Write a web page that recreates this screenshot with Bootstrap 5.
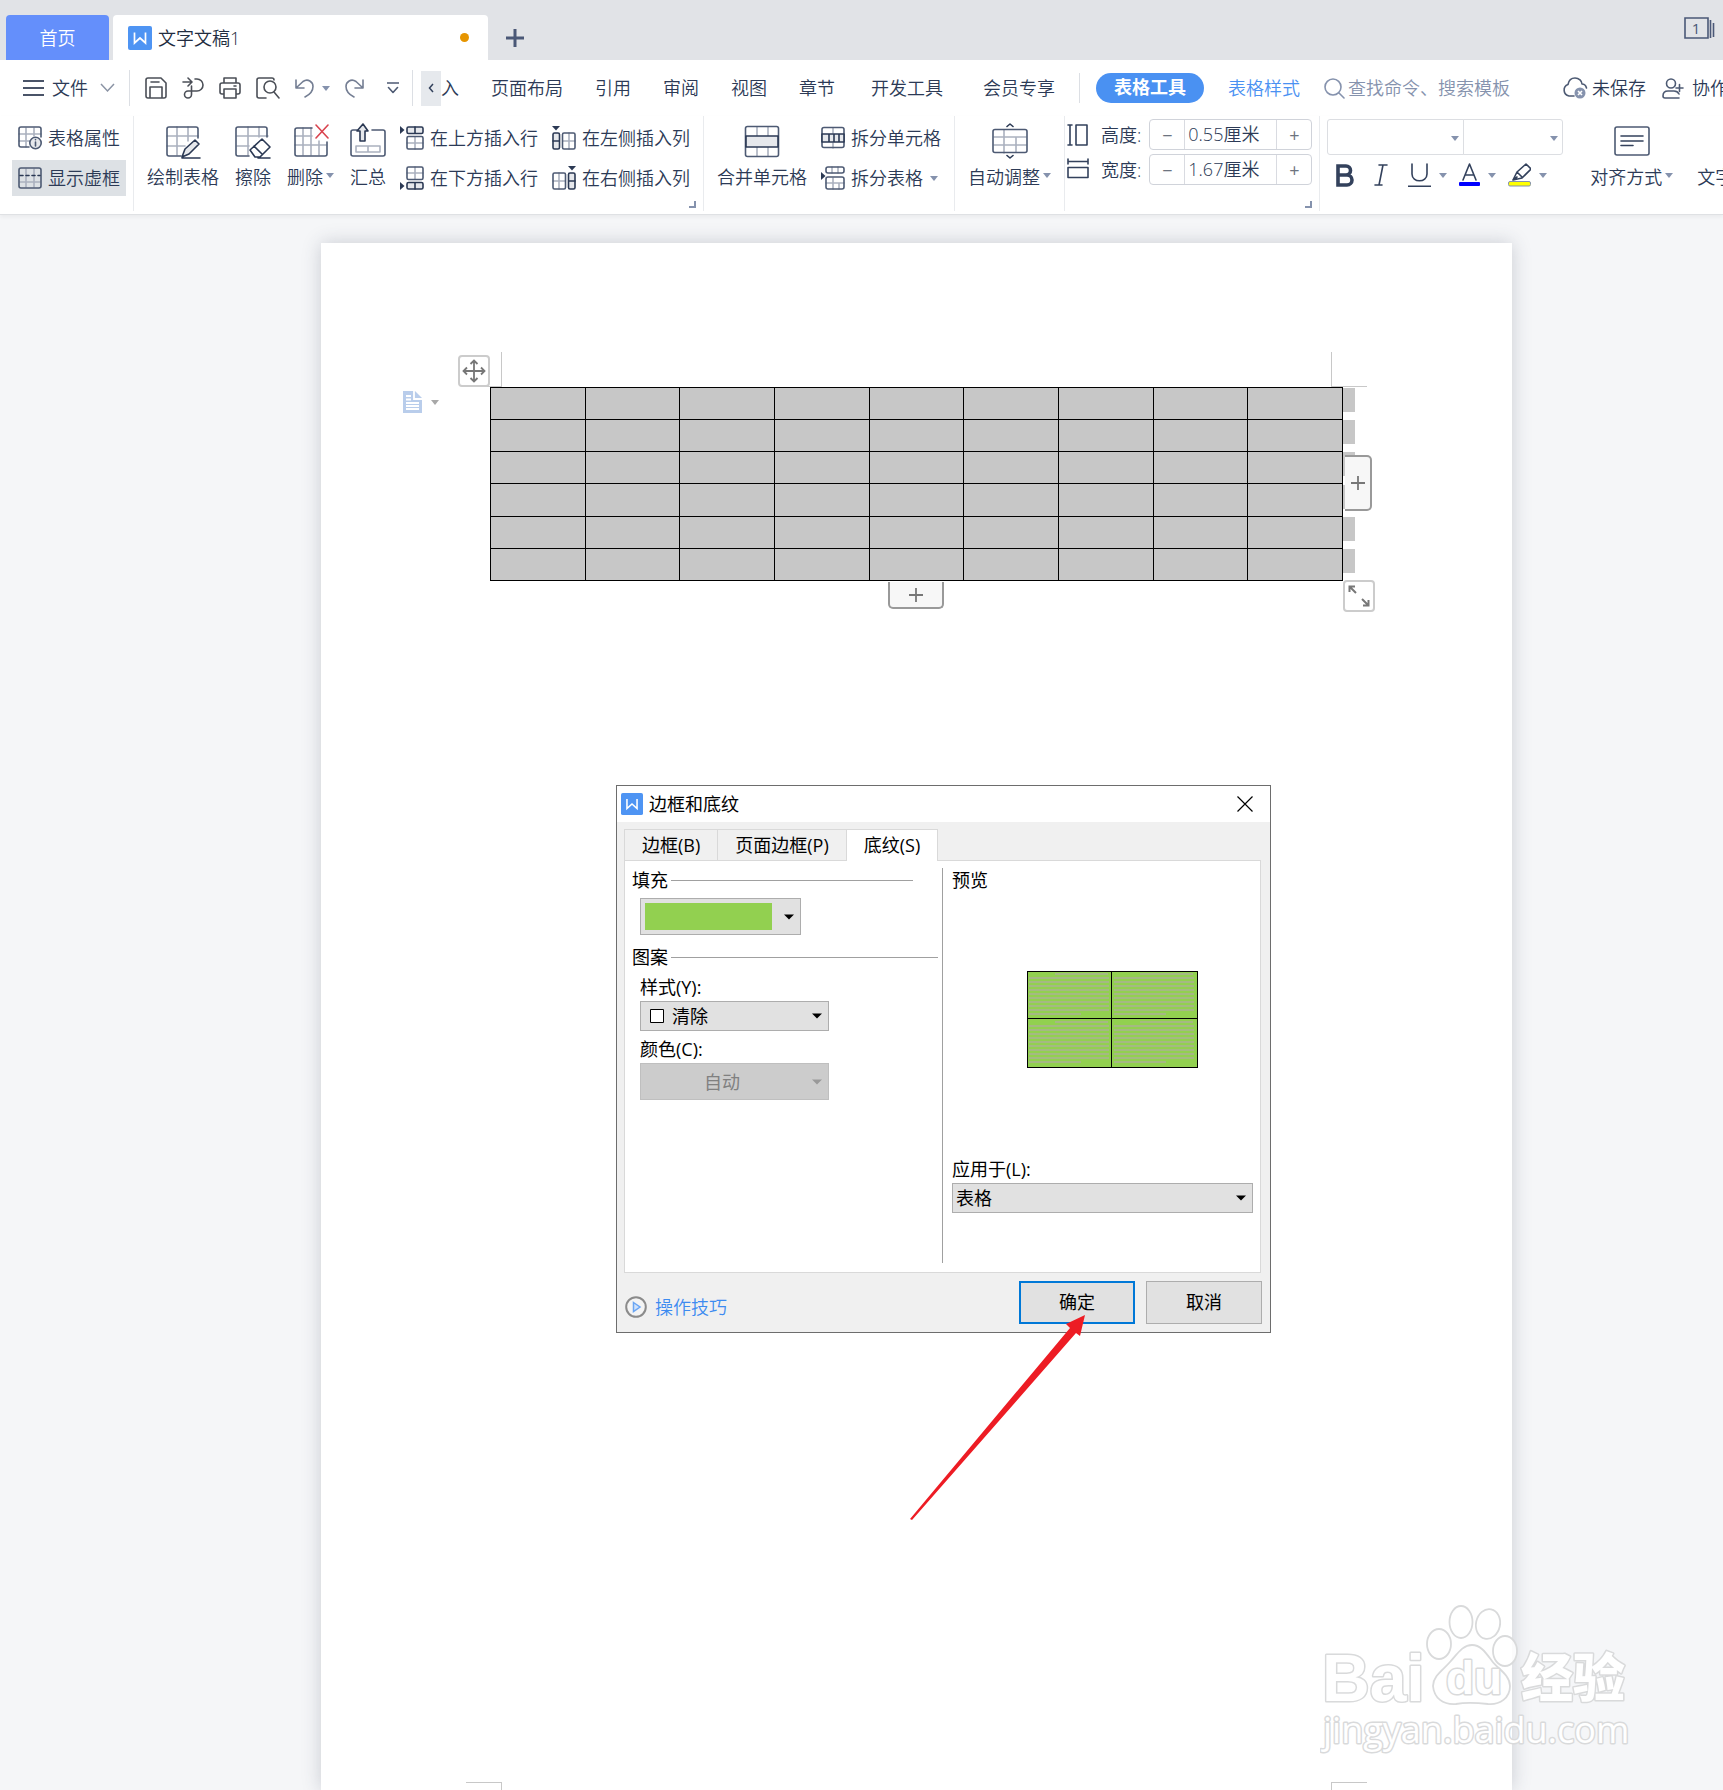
<!DOCTYPE html>
<html lang="zh-CN">
<head>
<meta charset="utf-8">
<meta name="viewport" content="width=device-width, initial-scale=1">
<title>文字文稿1</title>
<link href="https://cdn.jsdelivr.net/npm/bootstrap@5.3.0/dist/css/bootstrap.min.css" rel="stylesheet">
<style>
:root{--ink:#2c3a56;--soft:#8592ad;--rule:#e9ebee;--blue:#4a91f2}
body{font-family:"Open Sans","Noto Sans CJK SC",sans-serif;font-size:18px;font-weight:350;line-height:24px;color:var(--ink);background:#f5f6f8;overflow-x:hidden}
button,input,select{font-family:inherit;font-size:18px;font-weight:inherit;line-height:24px;color:inherit}
button{background:none;border:0;padding:0;white-space:nowrap}
svg{display:block;flex:none}
a{text-decoration:none;color:inherit}
.ln{fill:none;stroke:#4d5a73;stroke-width:1.6;stroke-linejoin:round;stroke-linecap:round}
.lt{stroke:#abb1bf}
.fl{fill:#e6e8ec}
.caret{width:0;height:0;border:4px solid transparent;border-top:5px solid var(--soft);border-bottom:0;flex:none}

.tabstrip{height:60px;padding:15px 4px 0 6px;background:#e1e3e7}
.home-tab{width:103px;color:#fff;background:#648ffb;border-radius:4px 4px 0 0}
.doc-tab{width:375px;margin-left:4px;padding:0 19px 0 15px;gap:6px;background:#fff;border-radius:4px 4px 0 0;color:#222c40}
.dot{width:9px;height:9px;border-radius:50%;background:#e69500}
.new-tab{margin-left:18px}
.wincount{margin-bottom:20px}
.menurow{height:56px;background:#fff}
.file-btn{margin:0 14px 0 23px}
.vr-line{width:1px;height:36px;background:#dcdfe4;flex:none}
.vr-short{height:30px}
.quick{gap:15px;padding:0 5px 0 15px}
.scroll-btn{width:20px;height:35px;background:#e6e9ed}
.menu-link{padding:0 16px;white-space:nowrap}
.menu-link.wide{padding:0 20px}
.pill{height:30px;padding:0 18px;line-height:28px;border-radius:15px;background:var(--blue);color:#fff;font-weight:700;white-space:nowrap}
.style-link{color:var(--blue)}
.search{gap:3px;color:var(--soft)}
.search input{width:190px;border:0;padding:0;background:none;outline:0}
.search input::placeholder{color:var(--soft);opacity:1}

.ribbon{height:99px;background:#fff;border-bottom:1px solid #dfe1e4;box-shadow:0 2px 4px rgba(0,0,0,.05);position:relative}
.rgroup{height:95px;padding-top:4px;border-right:1px solid var(--rule);position:relative;flex:none}
.g-show{padding-left:12px;padding-right:7px}
.g-edit{padding-left:13px;padding-right:13px}
.g-size{padding:3px 7px 0 2px}
.g-font{padding:3px 0 0 7px;border:0}
.g-align{padding-left:27px;border:0}
.small-btn{display:flex;align-items:center;gap:6px;height:36px}
.small-col{display:flex;flex-direction:column;gap:4px}
.after{margin-left:14px}
.boxed{padding:0 6px}
.boxed.on{background:#dde1e5}
.big-btn{display:flex;flex-direction:column;align-items:center;gap:6px;padding-top:3px;height:67px}
.big-btn svg{height:36px}
.cap{display:flex;align-items:center;gap:3px}
.big-btn .caret{margin-bottom:4px}
.corner{position:absolute;right:7px;bottom:3px;width:7px;height:7px;border:solid var(--soft);border-width:0 2px 2px 0}
.spin{display:flex;width:163px;height:31px;border:1px solid #d0d3da;border-radius:4px}
.spin button{width:34px;font-weight:400;color:#6d7480}
.spin input{width:93px;border:solid #d9dbe1;border-width:0 1px;padding:0 0 2px 3px;outline:0}
.combo{height:36px;border:1px solid #dcdee2;border-radius:3px;position:relative}
.combo select{appearance:none;border:0;background:none;width:100%;height:100%}
.combo .caret{position:absolute;right:4px;top:16px}
.c-name{width:137px;border-radius:3px 0 0 3px}
.c-pt{width:100px;border-radius:0 3px 3px 0;margin-left:-1px}
.fmt{padding:8px 0 0 9px}
.fmt button+button{margin-left:12px}
.fmt .wider+button{margin-left:20px}

.work{padding:28px 211px 0 321px;position:relative;overflow:hidden}
.sheet{min-height:1500px;padding:144px 169px 0;background:#fff;box-shadow:0 0 18px rgba(50,60,80,.22);position:relative}
.gridwrap{position:relative}
.docgrid{width:100%;height:194px;table-layout:fixed;border-collapse:collapse;background:#c7c7c7}
.docgrid td{border:1px solid #000;padding:0}
.handle{position:absolute;background:#fff;border:2px solid #ccc;border-radius:4px;width:32px;height:32px;display:grid;place-items:center}
.h-move{left:-32px;top:-32px}
.h-size{left:100%;top:calc(100% - 1px)}
.h-col{left:calc(100% + 2px);top:68px;width:27px;height:56px;background:#f7f7f7;border-color:#999;border-left:0;border-radius:0 5px 5px 0}
.h-row{left:calc(50% - 29px);top:calc(100% + 1px);width:56px;height:27px;background:#f7f7f7;border-color:#999;border-top:0;border-radius:0 0 5px 5px}
.marks{position:absolute;left:100%;top:1px;width:12px;height:185px;display:flex;flex-direction:column;justify-content:space-between}
.marks i{height:24px;background:#c7c7c7}
.crop{position:absolute;width:36px;height:35px;border:0 solid #c8c8c8}
.tl{left:-24px;top:-35px;border-width:0 1px 1px 0}
.tr{right:-24px;top:-35px;border-width:0 0 1px 1px}
.bl{left:145px;bottom:-27px;border-width:1px 1px 0 0}
.br{right:145px;bottom:-27px;border-width:1px 0 0 1px}
.para{position:absolute;left:-87px;top:4px;display:flex;align-items:center;gap:9px}
.para .caret{border-top-color:#a8a8a8}

.dlg{position:absolute;left:295px;top:542px;width:655px;border:1px solid #6d6d6d;background:#f0f0f0;color:#000;font-weight:400}
.dlg-title{height:36px;padding:0 17px 0 4px;gap:6px;background:#fff}
.dlg-tabs{padding:7px 7px 0;height:38px;display:flex;align-items:flex-end;position:relative}
.dlg-tabs button{height:31px;padding:0 17px;border:1px solid #d9d9d9;border-bottom:0;margin-right:-1px}
.dlg-tabs button.active{height:32px;background:#fff;margin-bottom:-1px;padding-bottom:2px;z-index:1}
.dlg-panel{margin:0 9px 0 7px;border:1px solid #d9d9d9;background:#fff;display:flex;height:413px}
.p-left{width:318px;margin:7px 0 9px;padding:0 4px 0 7px;border-right:1px solid #a0a0a0}
.p-right{flex:1;padding:7px 7px 0 9px}
.sect{display:flex;align-items:center;gap:3px}
.sect::after{content:"";flex:1;height:1px;background:#a0a0a0}
.sect.short{margin-right:25px}
.sect.next{padding-top:10px}
.inset{padding-left:8px;display:flex;flex-direction:column;align-items:flex-start}
.inset label{padding:6px 0 2px}
.pick{position:relative;background:#e1e1e1;border:1px solid #adadad;display:flex;align-items:center}
.pick select{appearance:none;background:none;border:0;width:100%;height:28px;padding:0 3px;color:#000;opacity:1;outline:0}
.pick .arr{position:absolute;right:6px}
.swatch{width:161px;height:37px;padding-left:4px;margin-top:6px}
.swatch span{width:127px;height:27px;background:#92d050}
.w-mid{width:189px}
.w-mid .box{position:absolute;left:9px}
.pick.w-mid select{padding-left:31px}
.pick.off{background:#ccc;border-color:#bfbfbf;height:37px;color:#808080}
.pick.off span{padding-left:63px}
.preview{margin:79px 0 89px 75px}
.p-right label{display:block;margin-bottom:2px}
.dlg-foot{padding:8px;display:flex;gap:11px}
.dlg-foot button{width:116px;height:43px;padding-bottom:2px;background:#e1e1e1;border:1px solid #adadad}
.dlg-foot button.main{border:2px solid #0078d7}
.help{color:#3d8bf0;gap:8px;padding-top:9px;font-weight:350}
.arrow{position:absolute;left:589px;top:1072px}
.wm{position:absolute;right:83px;bottom:30px}
.wm text{fill:#fff;stroke:#d9dadb;stroke-width:3;paint-order:stroke;stroke-linejoin:round}
</style>
</head>
<body class="d-flex flex-column min-vh-100">
<svg width="0" height="0" class="position-absolute">
  <symbol id="w" viewBox="0 0 24 24"><rect width="24" height="24" rx="2" fill="#4e94f3"/><path d="M6.500 6.500v10.500l5.500-5 5.500 5V6.500" fill="none" stroke="#fff" stroke-width="1.700"/></symbol>
  <symbol id="arr" viewBox="0 0 10 6"><path d="M0 0.500h10L5 5.500z"/></symbol>
  <symbol id="rowtop" viewBox="0 0 24 24"><path d="M0 0l4.500 4L0 8z" fill="#2b3954"/><g class="ln"><rect class="fl" x="7" y="1" width="16" height="6.500" rx="1.500" style="stroke:#2b3954"/><path d="M15 1v6" style="stroke:#2b3954"/><path class="lt" d="M15 11v12M7 17h16"/><rect x="7" y="10.500" width="16" height="12.500" rx="1.500"/></g></symbol>
</svg>

<header>
  <div class="tabstrip d-flex">
    <button class="home-tab">首页</button>
    <button class="doc-tab d-flex align-items-center">
      <svg width="24" height="24"><use href="#w"/></svg><span class="me-auto">文字文稿1</span><span class="dot"></span>
    </button>
    <button class="new-tab" aria-label="新建"><svg width="18" height="18"><path d="M9 0v18M0 9h18" stroke="#4a5877" stroke-width="3"/></svg></button>
    <button class="wincount ms-auto me-1" aria-label="窗口"><svg width="31" height="22" viewBox="0 0 31 22"><path d="M1 1h23v20H1zM26.500 3v18M29.500 6v14" fill="none" stroke="#4a5877" stroke-width="1.600"/><text x="12" y="17" text-anchor="middle" font-size="15" font-weight="400" fill="#4a5877">1</text></svg></button>
  </div>

  <nav class="menurow d-flex align-items-center overflow-hidden">
    <button class="file-btn d-flex align-items-center gap-2">
      <svg width="21" height="16"><path d="M0 1h21M0 8h21M0 15h21" stroke="#4a5468" stroke-width="1.800"/></svg>
      <span>文件</span>
      <svg width="15" height="10" class="ms-1"><path d="M1 1l6.500 7L14 1" fill="none" stroke="#8a93a4" stroke-width="1.500"/></svg>
    </button>
    <span class="vr-line"></span>
    <div class="quick d-flex align-items-center">
      <button aria-label="保存"><svg width="22" height="22" viewBox="0 0 22 22" class="ln" style="stroke:#4b4f57"><path d="M3 1h13l5 5v13a2 2 0 0 1-2 2H3a2 2 0 0 1-2-2V3a2 2 0 0 1 2-2M6 5h8M5 21V10h12v11"/></svg></button>
      <button aria-label="导出"><svg width="22" height="22" viewBox="0 0 22 22" class="ln" style="stroke:#4b4f57"><path d="M1 5h8M6 1l4 4-4 4M13 2h2a6 6 0 0 1 0 12H6a3.500 3.500 0 1 0 3.500 3.500V9"/></svg></button>
      <button aria-label="打印"><svg width="22" height="22" viewBox="0 0 22 22" class="ln" style="stroke:#4b4f57"><path d="M5 6V1h12v5M5 17H3a2 2 0 0 1-2-2V8a2 2 0 0 1 2-2h16a2 2 0 0 1 2 2v7a2 2 0 0 1-2 2h-2M5 12h12v9H5zM15 9h2"/></svg></button>
      <button aria-label="打印预览"><svg width="24" height="22" viewBox="0 0 24 22" class="ln" style="stroke:#4b4f57"><path d="M18 3a2 2 0 0 0-2-2H3a2 2 0 0 0-2 2v16a2 2 0 0 0 2 2h7M18 15l5 6"/><circle cx="14" cy="10" r="6"/></svg></button>
      <button class="d-flex align-items-center gap-2" aria-label="撤销"><svg width="19" height="20" viewBox="0 0 19 20" class="ln" style="stroke:#747e93"><path d="M1 2v8h8M1 10L8 3.500C13 0 18 4 18 8.500c0 5-3 8-8 10.500"/></svg><i class="caret"></i></button>
      <button aria-label="恢复"><svg width="19" height="20" viewBox="0 0 19 20" class="ln" style="stroke:#747e93"><path d="M18 2v8h-8M18 10l-7-6.500C6 0 1 4 1 8.500c0 5 3 8 8 10.500"/></svg></button>
      <button class="px-2" aria-label="更多"><svg width="12" height="12" viewBox="0 0 12 12" class="ln"><path d="M0 1h12M1.500 5.500L6 10.500l4.500-5"/></svg></button>
    </div>
    <span class="vr-line"></span>
    <button class="scroll-btn ms-2" aria-label="向左"><svg width="20" height="10"><path d="M12 1L8.500 5l3.500 4" fill="none" stroke="#33415c" stroke-width="1.500"/></svg></button>
    <a href="#" class="pe-3">入</a>
    <a href="#" class="menu-link">页面布局</a><a href="#" class="menu-link">引用</a><a href="#" class="menu-link">审阅</a><a href="#" class="menu-link">视图</a><a href="#" class="menu-link">章节</a><a href="#" class="menu-link wide">开发工具</a><a href="#" class="menu-link wide">会员专享</a>
    <span class="vr-line vr-short ms-1 me-3"></span>
    <a href="#" class="pill">表格工具</a>
    <a href="#" class="style-link ms-4 me-4 text-nowrap">表格样式</a>
    <label class="search d-flex align-items-center"><svg width="21" height="21" viewBox="0 0 21 21" class="ln" style="stroke:#8592ad"><circle cx="9" cy="9" r="8"/><path d="M15 15l5 5"/></svg><input type="text" placeholder="查找命令、搜索模板" aria-label="查找"></label>
    <button class="d-flex align-items-center gap-1 ms-4"><svg width="26" height="22" viewBox="0 0 26 22"><path class="ln" d="M12 19H7a6 6 0 0 1-1-11.500C7 2 11 1 13 1c4 0 7 3 7 6 3 0 4 2 4.500 4"/><circle cx="18" cy="16" r="5.500" fill="#8592ad"/><path d="M16 14l4 4M20 14l-4 4" stroke="#fff" stroke-width="1.600"/></svg>未保存</button>
    <button class="d-flex align-items-center gap-2 ms-3"><svg width="22" height="21" viewBox="0 0 22 21" class="ln"><circle cx="9" cy="5.500" r="4.500"/><path d="M17 20H3a2 2 0 0 1-2-2c0-4 3-5 5-5h6c3 0 4 1 5 3M14 10h7M17.500 6.500v7"/></svg>协作</button>
  </nav>

  <div class="ribbon d-flex overflow-hidden">
    <div class="rgroup g-show small-col">
      <button class="small-btn boxed"><svg width="24" height="24" viewBox="0 0 24 24" class="ln"><path class="lt" d="M8 2v19M16 2v8M1 8h22M1 15h12"/><path d="M11 21H3a2 2 0 0 1-2-2V3a2 2 0 0 1 2-2h18a2 2 0 0 1 2 2v8"/><circle class="fl" cx="17.500" cy="17" r="5.700"/><path d="M17.500 16v4M17.500 13.500v.2"/></svg>表格属性</button>
      <button class="small-btn boxed on"><svg width="24" height="22" viewBox="0 0 24 22" class="ln"><path class="lt" d="M8 2v18M16 2v18M2 15h20"/><rect x="1" y="1" width="22" height="20" rx="2"/><path d="M2 8.500h20" style="stroke:#2b3954;stroke-dasharray:3 3"/></svg>显示虚框</button>
    </div>

    <div class="rgroup g-edit d-flex">
      <div class="d-flex gap-3">
        <button class="big-btn"><svg width="36" viewBox="0 0 36 36" class="ln"><path class="lt" d="M12 4v28M23 4v14M2 13h31M2 23h18"/><path d="M16 33H4a2 2 0 0 1-2-2V6a2 2 0 0 1 2-2h27a2 2 0 0 1 2 2v9"/><path class="fl" d="M17 34l3-8 10-9 4 4-10 10-7 3zM17 35h18" style="stroke:#2b3954"/></svg>绘制表格</button>
        <button class="big-btn"><svg width="36" viewBox="0 0 36 36" class="ln"><path class="lt" d="M13 4v28M24 4v10M2 13h31M2 23h12"/><path d="M14 33H3a2 2 0 0 1-2-2V6a2 2 0 0 1 2-2h27a2 2 0 0 1 2 2v8"/><path d="M15 27l12-11 8 8-10 10h-5zM19 23l8 8M23 35h12" fill="#fff" style="stroke:#2b3954"/></svg>擦除</button>
        <button class="big-btn"><svg width="36" viewBox="0 0 36 36" class="ln"><path class="lt" d="M10 5v27M18 5v27M26 18v14M2 13h17M2 22h31"/><path d="M19 5H4a2 2 0 0 0-2 2v24a2 2 0 0 0 2 2h28a2 2 0 0 0 2-2V19"/><path d="M23 2l12 13M35 2L23 15" style="stroke:#d9434e"/></svg><span class="cap">删除<i class="caret"></i></span></button>
        <button class="big-btn"><svg width="36" viewBox="0 0 36 36" class="ln"><path d="M7 7H3a2 2 0 0 0-2 2v22a2 2 0 0 0 2 2h30a2 2 0 0 0 2-2V9a2 2 0 0 0-2-2h-11"/><path class="lt" d="M6 23h24v6H6zM18 23v6"/><path class="fl" d="M13 1l-6 7h3v10h5V8h3z" style="stroke:#2b3954"/></svg>汇总</button>
      </div>
      <div class="small-col after">
        <button class="small-btn"><svg width="24" height="24"><use href="#rowtop"/></svg>在上方插入行</button>
        <button class="small-btn"><svg width="24" height="24" viewBox="0 0 24 24"><use href="#rowtop" transform="matrix(1 0 0 -1 0 24)" width="24" height="24"/></svg>在下方插入行</button>
      </div>
      <div class="small-col after">
        <button class="small-btn"><svg width="24" height="24" viewBox="0 0 24 24"><use href="#rowtop" transform="matrix(0 1 1 0 0 0)" width="24" height="24"/></svg>在左侧插入列</button>
        <button class="small-btn"><svg width="24" height="24" viewBox="0 0 24 24"><use href="#rowtop" transform="matrix(0 1 -1 0 24 0)" width="24" height="24"/></svg>在右侧插入列</button>
      </div>
      <i class="corner"></i>
    </div>

    <div class="rgroup g-edit d-flex">
      <button class="big-btn"><svg width="36" viewBox="0 0 36 36" class="ln"><path class="lt" d="M13 4v9M24 4v9M13 24v9M24 24v9"/><rect x="1.500" y="3.500" width="33" height="30" rx="2"/><path class="fl" d="M2 13h32v11H2z" style="stroke:#2b3954"/></svg>合并单元格</button>
      <div class="small-col after">
        <button class="small-btn"><svg width="24" height="24" viewBox="0 0 24 24" class="ln"><path class="lt" d="M12 2v5M12 17v5"/><rect x="1" y="1.500" width="22" height="20" rx="2"/><path class="fl" d="M1 8h22v8H1zM8 8v8M13 8v8M18 8v8" style="stroke:#2b3954"/></svg>拆分单元格</button>
        <button class="small-btn"><svg width="24" height="24" viewBox="0 0 24 24" class="ln"><path d="M0 6l4.500 4L0 14z" fill="#2b3954" stroke="none"/><path class="lt" d="M11 1v6M17 1v6M12 12v11M18 17v6M5 17h18"/><rect x="5" y="1" width="18" height="6" rx="2"/><rect x="5" y="11" width="18" height="12" rx="2"/></svg><span class="cap">拆分表格<i class="caret ms-1"></i></span></button>
      </div>
    </div>

    <div class="rgroup g-edit d-flex">
      <button class="big-btn"><svg width="36" viewBox="0 0 36 36" class="ln"><path class="lt" d="M12 7v23M24 15v14M2 14h32M2 22h32"/><rect x="1" y="6.500" width="34" height="23" rx="2"/><path d="M15 3.500L18 1l3 2.500M15 32.500l3 2.500 3-2.500" style="stroke:#2b3954"/></svg><span class="cap">自动调整<i class="caret"></i></span></button>
    </div>

    <div class="rgroup g-size d-flex flex-column gap-1">
      <div class="d-flex align-items-center">
        <svg width="22" height="24" viewBox="0 0 22 24" class="ln"><path d="M1 2h4M3 2v20M1 22h4M9 2h11v20H9z" style="stroke:#33415c"/></svg>
        <label for="rh" class="ms-2 ps-1 me-2">高度:</label>
        <div class="spin ms-auto"><button aria-label="减">−</button><input id="rh" value="0.55厘米"><button aria-label="加">+</button></div>
      </div>
      <div class="d-flex align-items-center">
        <svg width="22" height="24" viewBox="0 0 22 24" class="ln"><path d="M1 1v5M1 3.500h20M21 1v5M1 9.500h20v10H1z" style="stroke:#33415c"/></svg>
        <label for="cw" class="ms-2 ps-1 me-2">宽度:</label>
        <div class="spin ms-auto"><button aria-label="减">−</button><input id="cw" value="1.67厘米"><button aria-label="加">+</button></div>
      </div>
      <i class="corner"></i>
    </div>

    <div class="rgroup g-font">
      <div class="d-flex">
        <div class="combo c-name"><select aria-label="字体"><option></option></select><i class="caret"></i></div>
        <div class="combo c-pt"><select aria-label="字号"><option></option></select><i class="caret"></i></div>
      </div>
      <div class="fmt d-flex align-items-center">
        <button class="wider" aria-label="加粗"><svg width="18" height="24" viewBox="0 0 18 24"><path d="M2 3h8a4.500 4.500 0 0 1 0 9H2zM2 12h9a5 5 0 0 1 0 10H2z" fill="none" stroke="#33415c" stroke-width="3.600"/></svg></button>
        <button class="wider" aria-label="倾斜"><svg width="14" height="24" viewBox="0 0 14 24" class="ln"><path d="M5 2h8M1 22h7M9 2L5 22" style="stroke:#33415c"/></svg></button>
        <button class="d-flex align-items-center gap-2" aria-label="下划线"><svg width="23" height="24" viewBox="0 0 23 24" class="ln"><path d="M4 1v10c0 9 15 9 15 0V1M0 23.200h23" style="stroke:#33415c"/></svg><i class="caret"></i></button>
        <button class="d-flex align-items-center gap-2" aria-label="字体颜色"><svg width="21" height="24" viewBox="0 0 21 24"><path class="ln" d="M4 17L10.500 1 17 17M6.500 12h8" style="stroke:#33415c"/><rect y="19" width="21" height="4" rx="1" fill="#00f"/></svg><i class="caret"></i></button>
        <button class="d-flex align-items-center gap-2" aria-label="突出显示"><svg width="23" height="24" viewBox="0 0 23 24"><path class="ln" d="M5 17l4-8 9-8 5 5-9 9zM9 9l5 5M5 17l4-3" style="stroke:#33415c"/><rect x=".5" y="18.500" width="22" height="4.500" rx="1.500" fill="#ff0" stroke="#8592ad"/></svg><i class="caret"></i></button>
      </div>
    </div>
    <div class="rgroup g-align d-flex gap-4">
      <button class="big-btn"><svg width="36" viewBox="0 0 36 36" class="ln"><rect x="1" y="4" width="34" height="28" rx="2"/><path d="M7 13h22M7 18h22M7 22.500h12" style="stroke:#33415c"/></svg><span class="cap">对齐方式<i class="caret"></i></span></button>
      <button class="big-btn"><svg width="36" viewBox="0 0 36 36" class="ln"><path class="lt" d="M9 31h20"/></svg>文字方向</button>
    </div>
  </div>
</header>

<main class="work flex-grow-1 d-flex">
  <div class="sheet flex-grow-1">
    <div class="gridwrap">
      <span class="crop tl"></span><span class="crop tr"></span>
      <div class="marks"><i></i><i></i><i></i><i></i><i></i><i></i></div>
      <table class="docgrid" aria-label="表格"><tbody id="rows"></tbody></table>
      <button class="para" aria-label="段落"><svg width="19" height="22" viewBox="0 0 19 22"><path d="M0 0h12l7 7v15H0z" fill="#b9cdeb"/><path d="M11 0v8h8M3 5h5M3 8.500h5M3 12h13M3 15h13M3 18h13" fill="none" stroke="#fff" stroke-width="1.800"/></svg><i class="caret"></i></button>
      <button class="handle h-move" aria-label="移动"><svg width="24" height="24" viewBox="0 0 24 24"><path d="M12 1.500v21M1.500 12h21M8.500 5L12 1.500 15.500 5M8.500 19l3.500 3.500 3.500-3.500M5 8.500L1.500 12 5 15.500M19 8.500l3.500 3.500-3.500 3.500" fill="none" stroke="#777" stroke-width="1.800"/></svg></button>
      <button class="handle h-col" aria-label="添加列"><svg width="14" height="14"><path d="M7 0v14M0 7h14" stroke="#777" stroke-width="1.800"/></svg></button>
      <button class="handle h-row" aria-label="添加行"><svg width="14" height="14"><path d="M7 0v14M0 7h14" stroke="#777" stroke-width="1.800"/></svg></button>
      <button class="handle h-size" aria-label="缩放"><svg width="22" height="22" viewBox="0 0 22 22"><path d="M8 8L2 2M1.500 7V1.500H7M14 14l6 6M20.500 15v5.500H15" fill="none" stroke="#777" stroke-width="2"/></svg></button>
    </div>
    <span class="crop bl"></span><span class="crop br"></span>

    <section class="dlg" role="dialog" aria-labelledby="dt">
      <div class="dlg-title d-flex align-items-center">
        <svg width="22" height="22"><use href="#w"/></svg><span id="dt" class="me-auto">边框和底纹</span>
        <button aria-label="关闭"><svg width="16" height="16"><path d="M.5 .5l15 15M15.500 .5l-15 15" stroke="#000" stroke-width="1.200"/></svg></button>
      </div>
      <div class="dlg-tabs"><button>边框(B)</button><button>页面边框(P)</button><button class="active">底纹(S)</button></div>
      <div class="dlg-panel">
        <div class="p-left">
          <div class="sect short">填充</div>
          <div class="inset">
            <button class="pick swatch" aria-label="填充颜色"><span></span><svg class="arr" width="10" height="6"><use href="#arr"/></svg></button>
          </div>
          <div class="sect next">图案</div>
          <div class="inset">
            <label for="sty">样式(Y):</label>
            <div class="pick w-mid"><svg class="box" width="14" height="14"><path d="M.5 .5h13v13H.5z" fill="#fff" stroke="#000"/></svg><select id="sty"><option>清除</option></select><svg class="arr" width="10" height="6"><use href="#arr"/></svg></div>
            <label for="clr">颜色(C):</label>
            <button id="clr" class="pick w-mid off" disabled><span>自动</span><svg class="arr" width="10" height="6" fill="#999"><use href="#arr"/></svg></button>
          </div>
        </div>
        <div class="p-right">
          <div>预览</div>
          <svg class="preview" width="171" height="97" viewBox="0 0 171 97">
            <defs><g id="para"><path d="M28 0h53M2 4h80M2 8h80M2 12h80M2 16h80M2 20h80M2 24h80M2 28h80M2 32h80M2 36h80M2 40h52" stroke="#a5b884" stroke-width="2"/></g></defs>
            <rect x=".5" y=".5" width="170" height="96" fill="#92d050" stroke="#000"/>
            <use href="#para" y="3"/><use href="#para" x="85" y="3"/><use href="#para" y="51"/><use href="#para" x="85" y="51"/>
            <path d="M84.500 0v97M0 47.500h171" stroke="#000"/>
          </svg>
          <label for="app">应用于(L):</label>
          <div class="pick"><select id="app"><option>表格</option></select><svg class="arr" width="10" height="6"><use href="#arr"/></svg></div>
        </div>
      </div>
      <div class="dlg-foot">
        <a href="#" class="help d-flex align-items-center me-auto"><svg width="22" height="22" viewBox="0 0 22 22"><circle cx="11" cy="11" r="9.800" fill="#f4f4f4" stroke="#8b8b8b" stroke-width="2"/><path d="M8.500 6.500l6.500 4.500-6.500 4.500z" fill="#cfe2fb" stroke="#6aa5f3" stroke-width="1.500"/></svg>操作技巧</a>
        <button class="main">确定</button><button>取消</button>
      </div>
    </section>
    <svg class="arrow" width="178" height="207" viewBox="0 0 178 207"><path d="M175 0l-19 9 4 4L0 204l2 1L166 18l4 3z" fill="#ed1c24"/></svg>
  </div>

  <svg class="wm" width="320" height="160" viewBox="0 0 320 160">
    <g fill="#fff" fill-opacity=".85" stroke="#d9dadb" stroke-width="1.800">
      <ellipse cx="119" cy="44" rx="12" ry="15"/><ellipse cx="141" cy="22" rx="11.500" ry="16"/><ellipse cx="168" cy="24" rx="12" ry="15" transform="rotate(12 168 24)"/><ellipse cx="185" cy="51" rx="12" ry="15"/>
      <path d="M152 45c9 0 14 8 20 16s18 14 18 25c0 12-10 19-22 18-9-1-21-2-32 0-13 1-22-6-23-18 0-10 10-16 17-24 8-9 13-17 22-17z"/>
    </g>
    <text x="2" y="101" font-family="Liberation Sans" font-weight="700" font-size="66">Bai</text>
    <text x="126" y="94" font-family="Liberation Sans" font-size="46" font-weight="700">du</text>
    <text x="201" y="97" font-family="Noto Sans CJK SC" font-weight="900" font-size="52">经验</text>
    <text x="3" y="143" font-family="Open Sans" font-weight="400" font-size="36">jingyan.baidu.com</text>
  </svg>
</main>
<script src="https://cdn.jsdelivr.net/npm/bootstrap@5.3.0/dist/js/bootstrap.bundle.min.js"></script>
<script>
document.getElementById('rows').innerHTML = ('<tr>' + '<td></td>'.repeat(9) + '</tr>').repeat(6);
</script>
</body>
</html>
